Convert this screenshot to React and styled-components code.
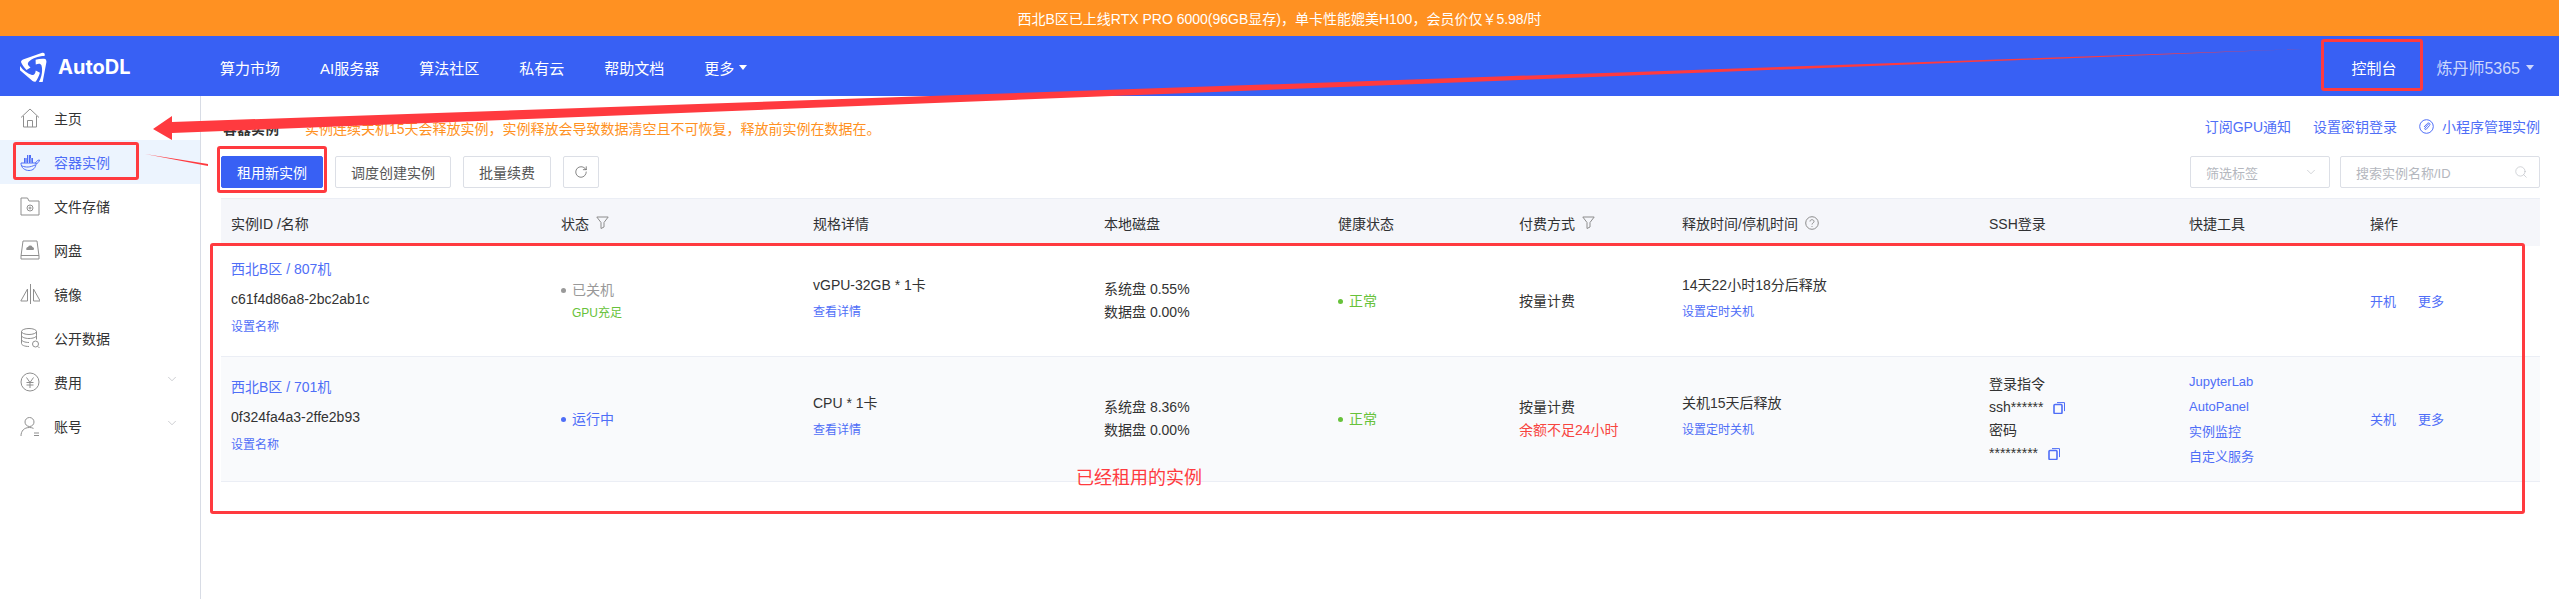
import React from 'react';
import styled, { createGlobalStyle } from 'styled-components';
import { ChevronDown, RotateCw, Search } from 'lucide-react';

const BLUE = '#3860f4';
const LINK = '#4f6ef7';
const RED = '#ff3a3f';
const COLUMNS = '330px 252px 291px 234px 181px 163px 307px 200px 181px 180px';

const GlobalStyle = createGlobalStyle`
    html, body {
        margin: 0;
        padding: 0;
        background: #fff;
    }
    body {
        font-family: "Liberation Sans", "Noto Sans CJK SC", sans-serif;
        font-size: 14px;
        color: #333;
        overflow: hidden;
    }
    * {
        box-sizing: border-box;
    }
`;

const Page = styled.div`
    position: relative;
    width: 2559px;
    height: 599px;
    overflow: hidden;
`;

const Banner = styled.div`
    height: 36px;
    line-height: 38px;
    text-align: center;
    color: #fff;
    background: #ff9122;
    font-size: 14px;
`;

const Header = styled.header`
    display: flex;
    align-items: center;
    height: 60px;
    padding: 2px 25px 0 20px;
    background: ${BLUE};
    color: #fff;
`;

const Logo = styled.div`
    display: flex;
    align-items: center;
    gap: 10px;
    width: 200px;
    font-family: Inter, "Liberation Sans", sans-serif;
    font-size: 20px;
    font-weight: 700;
`;

const Nav = styled.nav`
    display: flex;
    align-items: center;
    gap: 40px;
    font-size: 15px;
`;

const NavMore = styled.span`
    display: flex;
    align-items: center;
    gap: 5px;
`;

const Caret = styled.i`
    width: 0;
    height: 0;
    border: 4.5px solid transparent;
    border-top: 5px solid ${(p) => p.$color || '#fff'};
    border-bottom: 0;
`;

const HeaderRight = styled.div`
    display: flex;
    align-items: center;
    margin-left: auto;
    font-size: 15px;
`;

const UserName = styled.span`
    display: flex;
    align-items: center;
    gap: 6px;
    margin-left: 40px;
    font-size: 16px;
    color: rgba(255, 255, 255, 0.75);
`;

const Body = styled.div`
    display: flex;
    height: 503px;
`;

const Sidebar = styled.aside`
    flex: none;
    width: 201px;
    padding-top: 0;
    border-right: 1px solid #d8dce5;
`;

const SideItem = styled.div`
    display: flex;
    align-items: center;
    gap: 14px;
    height: 44px;
    padding: 0 20px;
    color: ${(p) => (p.$active ? LINK : '#333')};
    background: ${(p) => (p.$active ? '#ecf4fe' : 'transparent')};
    svg {
        flex: none;
    }
`;

const SideChevron = styled(ChevronDown)`
    margin-left: auto;
    color: #a8abb2;
    position: relative;
    top: -3px;
    right: 1px;
`;

const Main = styled.main`
    flex: 1;
    min-width: 0;
    padding: 20px 19px 0 20px;
`;

const TopRow = styled.div`
    display: flex;
    align-items: center;
    height: 20px;
    margin-bottom: 20px;
`;

const PageTitle = styled.h2`
    margin: 4px 26px 0 2px;
    font-size: 14px;
    font-weight: 700;
`;

const Warning = styled.span`
    color: #ff9122;
    font-size: 14px;
    position: relative;
    top: 2px;
`;

const TopLinks = styled.div`
    display: flex;
    align-items: center;
    gap: 22px;
    margin-left: auto;
    color: ${LINK};
`;

const MiniLink = styled.span`
    display: flex;
    align-items: center;
    gap: 8px;
`;

const Toolbar = styled.div`
    display: flex;
    align-items: stretch;
    gap: 12px;
    height: 32px;
    margin-bottom: 10px;
`;

const Button = styled.button`
    padding: 0 ${(p) => (p.$icon ? '10px' : '15px')};
    border: 1px solid ${(p) => (p.$primary ? BLUE : '#dcdfe6')};
    border-radius: 2px;
    background: ${(p) => (p.$primary ? BLUE : '#fff')};
    color: ${(p) => (p.$primary ? '#fff' : '#555')};
    font: inherit;
    display: flex;
    align-items: center;
`;

const Filters = styled.div`
    display: flex;
    gap: 10px;
    margin-left: auto;
`;

const Field = styled.div`
    display: flex;
    align-items: center;
    justify-content: space-between;
    width: ${(p) => p.$width}px;
    padding: 0 11px 0 15px;
    border: 1px solid #dcdfe6;
    border-radius: 2px;
    color: #b4b7be;
    font-size: 13px;
`;

const TableHead = styled.div`
    display: grid;
    grid-template-columns: ${COLUMNS};
    align-items: center;
    height: 48px;
    border-top: 1px solid #ebeef5;
    background: #f5f6fa;
    color: #303133;
`;

const HeadCell = styled.div`
    display: flex;
    align-items: center;
    gap: 7px;
    padding-left: 10px;
`;

const Row = styled.div`
    display: grid;
    grid-template-columns: ${COLUMNS};
    align-items: center;
    height: ${(p) => p.$height}px;
    border-bottom: 1px solid #ebeef5;
    background: ${(p) => (p.$hover ? '#f9fafc' : '#fff')};
`;

const Cell = styled.div`
    padding-left: 10px;
    line-height: 23px;
    color: #333;
`;

const NameBlock = styled(Cell)`
    padding-bottom: 8px;
`;

const NameTitle = styled.div`
    line-height: 30px;
    color: ${LINK};
`;

const NameId = styled.div`
    line-height: 30px;
`;

const SmallLink = styled.div`
    font-size: 12px;
    color: ${LINK};
    line-height: ${(p) => p.$line || 31}px;
`;

const StatusLine = styled.div`
    display: flex;
    align-items: center;
    gap: 6px;
    color: ${(p) => p.$color};
    &::before {
        content: '';
        width: 5px;
        height: 5px;
        border-radius: 50%;
        background: currentColor;
    }
`;

const GpuNote = styled.div`
    padding-left: 11px;
    font-size: 12px;
    color: #67c23a;
    line-height: 22px;
`;

const Danger = styled.div`
    color: #f8453f;
`;

const CopyRow = styled.div`
    display: flex;
    align-items: center;
    gap: 10px;
`;

const ToolLink = styled.div`
    font-size: 13px;
    line-height: 25px;
    color: ${LINK};
`;

const Actions = styled.div`
    display: flex;
    gap: 22px;
    font-size: 13px;
    color: ${LINK};
`;

const Mark = styled.div`
    position: absolute;
    left: ${(p) => p.$x}px;
    top: ${(p) => p.$y}px;
    width: ${(p) => p.$w}px;
    height: ${(p) => p.$h}px;
    border: 3px solid ${RED};
    border-radius: 3px;
`;

const Arrows = styled.svg`
    position: absolute;
    left: 0;
    top: 0;
`;

const Note = styled.div`
    position: absolute;
    left: 1076px;
    top: 466px;
    font-size: 18px;
    line-height: 24px;
    color: ${RED};
`;

const Ico = ({ children, w = 20, h = 24 }) => (
    <svg width={w} height={h} viewBox="0 0 20 24" fill="none" stroke="currentColor" strokeWidth="1">
        {children}
    </svg>
);

const sideGrey = '#8f8f8f';

const HomeIcon = () => (
    <Ico>
        <g stroke={sideGrey}>
            <path d="M1 11.5 10 3l9 8.5M3.5 10v11h13V10" />
            <path d="M7.5 21v-6.5h5V21" />
        </g>
    </Ico>
);

const ShipIcon = () => (
    <Ico>
        <g stroke={LINK}>
            <path d="M1 13h15c0 5-3 7.5-7 7.5S1 18 1 13Z" />
            <path d="M2 16c4 1.500 8 1.500 13-1M15.500 13c1-2 2.500-3 4-3-.5 2-2 3.500-3.500 4" />
        </g>
        <path d="M4 8h9v5H4zM7 5h4v3H7z" fill={LINK} stroke="none" />
        <path d="M6 8v5M8.500 5v8M11 8v5" stroke="#ecf4fe" strokeWidth=".7" />
    </Ico>
);

const FolderIcon = () => (
    <Ico>
        <g stroke={sideGrey}>
            <path d="M1 4v17h18V7H9L7.500 4H1Z" />
            <circle cx="10" cy="14" r="3" />
            <circle cx="10" cy="14" r="1" />
        </g>
    </Ico>
);

const DriveIcon = () => (
    <Ico>
        <g stroke={sideGrey}>
            <path d="M3 3h14l2 15v3H1v-3L3 3ZM1 17.500h18" />
        </g>
        <path d="M6.500 12a2 2 0 0 1 1.500-3 2.500 2.500 0 0 1 4.500 0 2 2 0 0 1 1 3h-7Z" fill={sideGrey} stroke="none" />
    </Ico>
);

const MirrorIcon = () => (
    <Ico>
        <g stroke={sideGrey}>
            <path d="M10.500 2v20M7.500 7v12H.8L7.500 7ZM13.500 7v12h6.700L13.500 7Z" />
        </g>
    </Ico>
);

const DataIcon = () => (
    <Ico>
        <g stroke={sideGrey}>
            <ellipse cx="9" cy="5.500" rx="7.500" ry="3" />
            <path d="M1.500 5.500v12c0 1.600 3 3 7.500 3M1.500 9.500c0 1.700 3.500 3 7.500 3s7.500-1.300 7.500-3v-4M1.500 13.500c0 1.700 3.500 3 7.500 3M16.500 9.500v4" />
            <circle cx="15.500" cy="18" r="3" />
            <path d="m18 20.500 1.500 1.500" />
        </g>
    </Ico>
);

const YenIcon = () => (
    <Ico>
        <g stroke={sideGrey}>
            <circle cx="10" cy="12" r="9" />
            <path d="m6.500 7.500 3.500 5 3.500-5M6.500 12.500h7M6.500 15h7M10 12.500V18" />
        </g>
    </Ico>
);

const UserIcon = () => (
    <Ico>
        <g stroke={sideGrey}>
            <circle cx="9.500" cy="8" r="4.500" />
            <path d="M1 22c0-5 3-8.500 8.500-8.500 1.500 0 2.800.3 4 .9M14 19h5M14 21.500h5" />
        </g>
    </Ico>
);

const FilterIcon = () => (
    <svg width="13" height="13" viewBox="0 0 13 13" fill="none" stroke="#8c8c8c">
        <path d="M.8 1h11.400L8 6.500V11l-3 1.500v-6L.8 1Z" />
    </svg>
);

const HelpIcon = () => (
    <svg width="14" height="14" viewBox="0 0 14 14" fill="none" stroke="#8c8c8c">
        <circle cx="7" cy="7" r="6.300" />
        <path d="M5 5.500C5 4.200 6 3.700 7 3.700s2 .6 2 1.800c0 1.400-2 1.500-2 3M7 10v.9" />
    </svg>
);

const LinkIcon = () => (
    <svg width="15" height="15" viewBox="0 0 15 15" fill="none" stroke={LINK}>
        <circle cx="7.500" cy="7.500" r="6.800" />
        <path d="M10 4.500 6 9c-1 1.200 .5 2 1.300 1.200L10.500 6.500c1.500-2-1-3.300-2.200-2L5 8" />
    </svg>
);

const CopyIcon = () => (
    <svg width="13" height="12" viewBox="0 0 13 12" fill="none" stroke={LINK}>
        <path d="M4 .6h7.500v8.500" strokeWidth="1" />
        <rect x="1" y="2.500" width="8" height="9" rx="1" strokeWidth="1.600" />
    </svg>
);

const blade = 'M1 10 C1 9 2 8 3 7.500 L21.500 1 C24 0 25.500 1.500 24.500 4 C18 4 12 6.500 8.500 10 C7 12 8 13.500 10.500 15.500 L6.500 18 C4 15.500 2 12.500 1 10Z';

const LogoMark = () => (
    <svg width="28" height="30" viewBox="0 0 28 30" fill="#fff">
        <path d={blade} />
        <path d={blade} transform="rotate(120 14 15.500)" />
        <path d={blade} transform="rotate(240 14 15.500)" />
    </svg>
);

const sideItems = [
    { label: '主页', icon: <HomeIcon /> },
    { label: '容器实例', icon: <ShipIcon />, active: true },
    { label: '文件存储', icon: <FolderIcon /> },
    { label: '网盘', icon: <DriveIcon /> },
    { label: '镜像', icon: <MirrorIcon /> },
    { label: '公开数据', icon: <DataIcon /> },
    { label: '费用', icon: <YenIcon />, more: true },
    { label: '账号', icon: <UserIcon />, more: true },
];

const navItems = ['算力市场', 'AI服务器', '算法社区', '私有云', '帮助文档'];

const DiskCell = ({ sys, data }) => (
    <Cell>
        <div>系统盘 {sys}</div>
        <div>数据盘 {data}</div>
    </Cell>
);

const NameCell = ({ title, id }) => (
    <NameBlock>
        <NameTitle>{title}</NameTitle>
        <NameId>{id}</NameId>
        <SmallLink $line={26}>设置名称</SmallLink>
    </NameBlock>
);

const App = () => (
    <Page>
        <GlobalStyle />
        <Banner>西北B区已上线RTX PRO 6000(96GB显存)，单卡性能媲美H100，会员价仅￥5.98/时</Banner>
        <Header>
            <Logo>
                <LogoMark />
                AutoDL
            </Logo>
            <Nav>
                {navItems.map((item) => (
                    <span key={item}>{item}</span>
                ))}
                <NavMore>
                    更多
                    <Caret />
                </NavMore>
            </Nav>
            <HeaderRight>
                <span>控制台</span>
                <UserName>
                    炼丹师5365
                    <Caret $color="rgba(255,255,255,.75)" />
                </UserName>
            </HeaderRight>
        </Header>
        <Body>
            <Sidebar>
                {sideItems.map((item) => (
                    <SideItem key={item.label} $active={item.active}>
                        {item.icon}
                        {item.label}
                        {item.more && <SideChevron size={14} strokeWidth={1} />}
                    </SideItem>
                ))}
            </Sidebar>
            <Main>
                <TopRow>
                    <PageTitle>容器实例</PageTitle>
                    <Warning>实例连续关机15天会释放实例，实例释放会导致数据清空且不可恢复，释放前实例在数据在。</Warning>
                    <TopLinks>
                        <span>订阅GPU通知</span>
                        <span>设置密钥登录</span>
                        <MiniLink>
                            <LinkIcon />
                            小程序管理实例
                        </MiniLink>
                    </TopLinks>
                </TopRow>
                <Toolbar>
                    <Button $primary>租用新实例</Button>
                    <Button>调度创建实例</Button>
                    <Button>批量续费</Button>
                    <Button $icon>
                        <RotateCw size={14} strokeWidth={1.2} />
                    </Button>
                    <Filters>
                        <Field $width={140}>
                            筛选标签
                            <ChevronDown size={14} strokeWidth={1} />
                        </Field>
                        <Field $width={200}>
                            搜索实例名称/ID
                            <Search size={14} strokeWidth={1} />
                        </Field>
                    </Filters>
                </Toolbar>
                <TableHead>
                    <HeadCell>实例ID /名称</HeadCell>
                    <HeadCell>
                        状态
                        <FilterIcon />
                    </HeadCell>
                    <HeadCell>规格详情</HeadCell>
                    <HeadCell>本地磁盘</HeadCell>
                    <HeadCell>健康状态</HeadCell>
                    <HeadCell>
                        付费方式
                        <FilterIcon />
                    </HeadCell>
                    <HeadCell>
                        释放时间/停机时间
                        <HelpIcon />
                    </HeadCell>
                    <HeadCell>SSH登录</HeadCell>
                    <HeadCell>快捷工具</HeadCell>
                    <HeadCell>操作</HeadCell>
                </TableHead>
                <Row $height={111}>
                    <NameCell title="西北B区 / 807机" id="c61f4d86a8-2bc2ab1c" />
                    <Cell>
                        <StatusLine $color="#999">已关机</StatusLine>
                        <GpuNote>GPU充足</GpuNote>
                    </Cell>
                    <Cell>
                        <div>vGPU-32GB * 1卡</div>
                        <SmallLink>查看详情</SmallLink>
                    </Cell>
                    <DiskCell sys="0.55%" data="0.00%" />
                    <Cell>
                        <StatusLine $color="#67c23a">正常</StatusLine>
                    </Cell>
                    <Cell>按量计费</Cell>
                    <Cell>
                        <div>14天22小时18分后释放</div>
                        <SmallLink>设置定时关机</SmallLink>
                    </Cell>
                    <Cell />
                    <Cell />
                    <Cell>
                        <Actions>
                            <span>开机</span>
                            <span>更多</span>
                        </Actions>
                    </Cell>
                </Row>
                <Row $height={125} $hover>
                    <NameCell title="西北B区 / 701机" id="0f324fa4a3-2ffe2b93" />
                    <Cell>
                        <StatusLine $color={LINK}>运行中</StatusLine>
                    </Cell>
                    <Cell>
                        <div>CPU * 1卡</div>
                        <SmallLink>查看详情</SmallLink>
                    </Cell>
                    <DiskCell sys="8.36%" data="0.00%" />
                    <Cell>
                        <StatusLine $color="#67c23a">正常</StatusLine>
                    </Cell>
                    <Cell>
                        <div>按量计费</div>
                        <Danger>余额不足24小时</Danger>
                    </Cell>
                    <Cell>
                        <div>关机15天后释放</div>
                        <SmallLink>设置定时关机</SmallLink>
                    </Cell>
                    <Cell>
                        <div>登录指令</div>
                        <CopyRow>
                            ssh******
                            <CopyIcon />
                        </CopyRow>
                        <div>密码</div>
                        <CopyRow>
                            *********
                            <CopyIcon />
                        </CopyRow>
                    </Cell>
                    <Cell>
                        <ToolLink>JupyterLab</ToolLink>
                        <ToolLink>AutoPanel</ToolLink>
                        <ToolLink>实例监控</ToolLink>
                        <ToolLink>自定义服务</ToolLink>
                    </Cell>
                    <Cell>
                        <Actions>
                            <span>关机</span>
                            <span>更多</span>
                        </Actions>
                    </Cell>
                </Row>
            </Main>
        </Body>
        <Mark $x={13} $y={142} $w={126} $h={38} />
        <Mark $x={217} $y={146} $w={110} $h={47} />
        <Mark $x={2321} $y={39} $w={102} $h={52} />
        <Mark $x={210} $y={243} $w={2315} $h={271} />
        <Arrows width="2559" height="599">
            <polygon fill={RED} points="153,129 172,116 172,122 2303,49 172,133 172,140" />
            <polygon fill={RED} points="145,154 208,164 208,166" />
        </Arrows>
        <Note>已经租用的实例</Note>
    </Page>
);

export default App;
